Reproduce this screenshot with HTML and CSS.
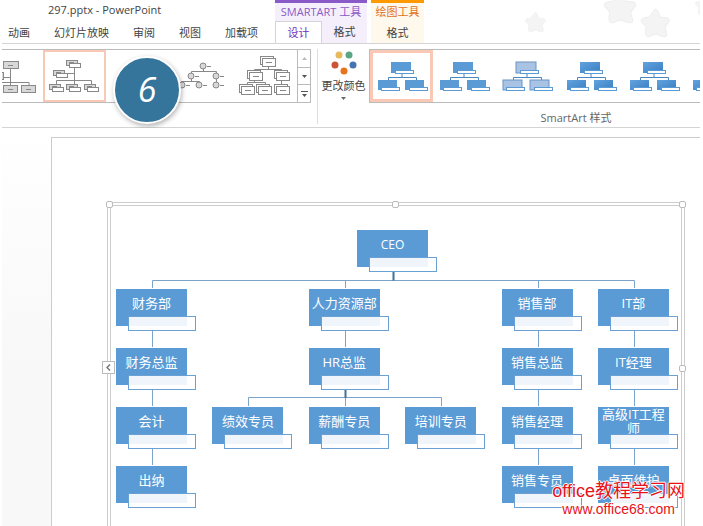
FILE: index.html
```html
<!DOCTYPE html>
<html lang="zh-CN">

<head>
    <meta charset="UTF-8">
    <meta name="viewport" content="width=device-width, initial-scale=1.0">
    <title>297.pptx - PowerPoint</title>
    <link rel="stylesheet" href="styles.css">
</head>

<body>
    <!-- shared shapes -->
    <svg class="defs" aria-hidden="true">
        <defs>
            <linearGradient id="shade" x1="0" y1="0" x2="1" y2="1">
                <stop offset="0" stop-color="#62a3de" />
                <stop offset="1" stop-color="#3a7fc4" />
            </linearGradient>
            <g id="pair">
                <rect x="0.5" y="0.5" width="11" height="5" fill="#d8d8d8" />
                <rect x="3.5" y="3.5" width="11" height="4" fill="#fff" />
                <path d="M3 2.5h5" />
            </g>
            <g id="stack">
                <rect x="0.5" y="0.5" width="13" height="8" fill="#fff" />
                <rect x="2.5" y="2.5" width="13" height="8" fill="#fff" />
                <path d="M6 6.5h6" />
            </g>
            <g id="dot">
                <circle cx="0" cy="0" r="3" fill="#d8d8d8" />
                <path d="M4 .5h4" />
            </g>
            <g id="org">
                <path class="org-line" d="M32 22v4M18.5 29v-2.5h28V29" />
                <rect x="21" y="11" width="20" height="11" />
                <rect x="8" y="29" width="19" height="10" />
                <rect x="35" y="29" width="19" height="10" />
                <rect class="org-cap" x="25.5" y="19.5" width="18" height="3" />
                <rect class="org-cap" x="11.5" y="36.5" width="18" height="3" />
                <rect class="org-cap" x="39.5" y="36.5" width="18" height="3" />
            </g>
            <path id="star" d="M16 2q3 0 5 8l8 1q4 2-3 9l2 8q-1 4-11-1l-8 3q-4-1-2-10l-5-6q-1-3 8-4z" />
        </defs>
    </svg>

    <header class="header">
        <svg class="stars" width="180" height="42" aria-hidden="true">
            <use href="#star" transform="translate(82 -10) scale(1.1)" />
            <use href="#star" transform="translate(4 11) scale(.7)" />
            <use href="#star" transform="translate(119 7)" />
            <use href="#star" transform="translate(174 -6) scale(.7)" />
        </svg>
        <div class="main-tabs">
            <h1 class="title">297.pptx - PowerPoint</h1>
            <nav class="tabs">
                <button class="tab">动画</button>
                <button class="tab">幻灯片放映</button>
                <button class="tab">审阅</button>
                <button class="tab">视图</button>
                <button class="tab">加载项</button>
            </nav>
        </div>
        <div class="tool-group smartart">
            <p class="tool-title">SMARTART 工具</p>
            <div class="tool-tabs">
                <button class="tab active">设计</button>
                <button class="tab">格式</button>
            </div>
        </div>
        <div class="tool-group drawing">
            <p class="tool-title">绘图工具</p>
            <div class="tool-tabs">
                <button class="tab">格式</button>
            </div>
        </div>
    </header>

    <section class="ribbon">
        <div class="gallery layouts">
            <div class="layout-list">
                <button class="thumb" aria-label="组织结构图">
                    <svg class="outline" width="59" height="48">
                        <path d="M28.5 16v18M18 25.5h10M9 34V30.5h38V34" />
                        <g fill="#d8d8d8">
                            <rect x="21.5" y="9.5" width="15" height="7" />
                            <rect x="8.5" y="20.5" width="13" height="7" />
                            <rect x="21.5" y="33.5" width="14" height="7" />
                            <rect x="39.5" y="33.5" width="14" height="7" />
                        </g>
                        <path d="M26 13.5h5M26 37.5h5M44 37.5h5" />
                    </svg>
                </button>
                <button class="thumb selected" aria-label="姓名和职务组织结构图">
                    <svg class="outline" width="59" height="48">
                        <path d="M29.5 15v18M20 21.5h9M11.5 33v-4.5h35V33" />
                        <use href="#pair" x="21" y="8" />
                        <use href="#pair" x="8" y="18" />
                        <use href="#pair" x="4" y="32" />
                        <use href="#pair" x="21" y="32" />
                        <use href="#pair" x="39" y="32" />
                    </svg>
                </button>
                <button class="thumb" aria-label="半圆组织结构图">
                    <svg class="outline" width="59" height="48">
                        <path d="M29.5 18v15M14.5 33v-4.5h30V33" />
                    </svg>
                </button>
                <button class="thumb" aria-label="圆形图片层次结构">
                    <svg class="outline" width="59" height="48">
                        <path d="M32.5 16v4M20.5 22v-2.5h25v14M10.5 33v-3.5h18V33M20.5 26v4" />
                        <use href="#dot" x="32" y="14" />
                        <use href="#dot" x="20" y="24" />
                        <use href="#dot" x="45" y="24" />
                        <use href="#dot" x="11" y="33" />
                        <use href="#dot" x="28" y="33" />
                        <use href="#dot" x="45" y="33" />
                    </svg>
                </button>
                <button class="thumb" aria-label="层次结构">
                    <svg class="outline" width="59" height="48">
                        <path d="M34.5 14v4M20.5 20v-2.5h27V33M13.5 33v-2.5h18V33M20.5 27v4" />
                        <use href="#stack" x="26" y="4" />
                        <use href="#stack" x="13" y="18" />
                        <use href="#stack" x="40" y="18" />
                        <use href="#stack" x="5" y="32" />
                        <use href="#stack" x="22" y="32" />
                        <use href="#stack" x="40" y="32" />
                    </svg>
                </button>
            </div>
            <div class="scroll">
                <button aria-label="上一行" disabled><svg width="5" height="3"><path d="M0 3l2.5-3L5 3z" /></svg></button>
                <button aria-label="下一行"><svg width="5" height="3"><path d="M0 0h5L2.5 3z" /></svg></button>
                <button aria-label="其他"><svg width="7" height="6"><path d="M0 0h7v1H0zM1 3h5L3.5 6z" /></svg></button>
            </div>
            <span class="step">6</span>
        </div>

        <div class="divider"></div>

        <button class="colors">
            <svg width="26" height="24" aria-hidden="true">
                <circle cx="8" cy="4" r="3.5" fill="#e8b85c" />
                <circle cx="18" cy="4" r="3.5" fill="#5aa583" />
                <circle cx="4" cy="14" r="3.5" fill="#cb5337" />
                <circle cx="22" cy="14" r="3.5" fill="#4674b0" />
                <circle cx="13" cy="20" r="3.5" fill="#e8731c" />
            </svg>
            <span>更改颜色</span>
            <svg width="5" height="3" aria-hidden="true"><path d="M0 0h5L2.5 3z" fill="#666" /></svg>
        </button>

        <div class="styles">
            <div class="gallery style-list">
                <button class="thumb selected" aria-label="简单填充"><svg class="org" width="59" height="48"><use href="#org" x="-2" y="-1" /></svg></button>
                <button class="thumb" aria-label="白色轮廓"><svg class="org" width="59" height="48"><use href="#org" x="-3" y="-1" /></svg></button>
                <button class="thumb" aria-label="细微效果"><svg class="org subtle" width="59" height="48"><use href="#org" x="-3" y="-1" /></svg></button>
                <button class="thumb" aria-label="中等效果"><svg class="org shaded" width="59" height="48"><use href="#org" x="-2" y="-1" /></svg></button>
                <button class="thumb" aria-label="强烈效果"><svg class="org shaded" width="59" height="48"><use href="#org" x="-2" y="-1" /></svg></button>
                <button class="thumb" aria-label="优雅"><svg class="org shaded" width="59" height="48"><use href="#org" x="-2" y="-1" /></svg></button>
            </div>
            <p class="group-name">SmartArt 样式</p>
        </div>
    </section>

    <main class="workspace">
        <div class="slide">
            <div class="frame">
                <i class="handle top-left"></i>
                <i class="handle top"></i>
                <i class="handle top-right"></i>
                <i class="handle right"></i>
                <button class="pane-toggle" aria-label="文本窗格">
                    <svg width="5" height="7"><path d="M4 0.5L1 3.5l3 3" fill="none" stroke="#777" stroke-width="1.5" /></svg>
                </button>

                <div class="chart">
                    <svg class="lines" viewBox="0 0 562 278" preserveAspectRatio="none" aria-hidden="true">
                        <path d="M36.5 58V50.5H518.5V58M229.5 50V58M422.5 50V58" />
                        <path d="M36.5 101v16M229.5 101v16M422.5 101v16M518.5 101v16" />
                        <path d="M36.5 160v16M422.5 160v16M518.5 160v16M229.5 160v16" />
                        <path d="M132.5 176v-8.5H325.5v8.5" />
                        <path d="M36.5 219v16M422.5 219v16M518.5 219v16" />
                        <path class="trunk" d="M277.5 42v8.5M229.5 160v8" />
                    </svg>
                    <div class="node ceo"><span>CEO</span></div>

                    <div class="node col-1"><span>财务部</span></div>
                    <div class="node col-3"><span>人力资源部</span></div>
                    <div class="node col-5"><span>销售部</span></div>
                    <div class="node col-6"><span>IT部</span></div>

                    <div class="node col-1"><span>财务总监</span></div>
                    <div class="node col-3"><span>HR总监</span></div>
                    <div class="node col-5"><span>销售总监</span></div>
                    <div class="node col-6"><span>IT经理</span></div>

                    <div class="node col-1"><span>会计</span></div>
                    <div class="node col-2"><span>绩效专员</span></div>
                    <div class="node col-3"><span>薪酬专员</span></div>
                    <div class="node col-4"><span>培训专员</span></div>
                    <div class="node col-5"><span>销售经理</span></div>
                    <div class="node col-6"><span>高级IT工程师</span></div>

                    <div class="node col-1"><span>出纳</span></div>
                    <div class="node col-5"><span>销售专员</span></div>
                    <div class="node col-6"><span>桌面维护</span></div>
                </div>
            </div>
        </div>
        <div class="watermark">
            <p class="site-name">office教程学习网</p>
            <p class="site-url">www.office68.com</p>
        </div>
    </main>
</body>

</html>
```

FILE: styles.css
```css
* {
    padding: 0;
    margin: 0;
    box-sizing: border-box;
}

body {
    display: flex;
    flex-direction: column;
    height: 100vh;
    padding: 0 3px 0 2px;
    overflow: hidden;
    font-family: "Open Sans", "Noto Sans CJK SC", sans-serif;
    font-size: 11px;
    line-height: 16px;
    color: #444;
    background: #fff;
}

button {
    font: inherit;
    color: inherit;
    background: none;
    border: none;
    cursor: pointer;
}

svg {
    display: block;
    flex-shrink: 0;
}

.defs {
    position: absolute;
    width: 0;
    height: 0;
}

/* title and tabs */

.header {
    position: relative;
    display: flex;
    height: 44px;
    flex-shrink: 0;
    border-bottom: 1px solid #d4d4d4;
}

.stars {
    position: absolute;
    top: 0;
    right: 0;
    fill: #f4f4f4;
    stroke: #eee;
}

.main-tabs {
    display: flex;
    flex-direction: column;
    width: 273px;
}

.title {
    height: 22px;
    padding: 2px 0 0 46px;
    font-size: 11px;
    font-weight: 400;
}

.tabs {
    display: flex;
    gap: 24px;
    padding-left: 6px;
}

.tab {
    height: 21px;
    line-height: 20px;
    white-space: nowrap;
}

.tool-group {
    display: flex;
    flex-direction: column;
    text-align: center;
}

.tool-title {
    height: 19px;
    line-height: 18px;
    white-space: nowrap;
}

.tool-tabs {
    display: flex;
    flex: 1;
}

.tool-tabs .tab {
    flex: 1;
}

.smartart {
    width: 92px;
    margin-right: 4px;
    border-top: 3px solid #8a5bc8;
    background: #f5effc;
}

.smartart .tool-title {
    color: #8a5bc8;
}

.drawing {
    width: 53px;
    border-top: 3px solid #f90;
    background: #fff8ec;
}

.drawing .tool-title {
    color: #e0701c;
}

.tool-tabs .active {
    height: 22px;
    border: 1px solid #d4d4d4;
    border-bottom: none;
    color: #7030c0;
    background: #fff;
}

/* ribbon */

.ribbon {
    display: flex;
    flex-shrink: 0;
    height: 84px;
    padding-top: 5px;
    border-bottom: 1px solid #d4d4d4;
}

.gallery {
    display: flex;
    height: 54px;
    border: 1px solid #bbb;
}

.layouts {
    position: relative;
    width: 309px;
    border-left: none;
}

.layout-list {
    display: flex;
    justify-content: flex-end;
    flex: 1;
    min-width: 0;
    padding-right: 2px;
    overflow: hidden;
}

.thumb {
    flex: 0 0 63px;
    height: 52px;
    border: 2px solid transparent;
}

.thumb.selected {
    border-color: #f9c9b6;
}

.outline {
    fill: none;
    stroke: #888;
}

.scroll {
    display: flex;
    flex-direction: column;
    width: 13px;
    border-left: 1px solid #bbb;
}

.scroll button {
    display: flex;
    flex: 1;
    align-items: center;
    justify-content: center;
    fill: #555;
}

.scroll button + button {
    border-top: 1px solid #bbb;
}

.scroll button:disabled {
    fill: #bbb;
}

.step {
    position: absolute;
    top: 6px;
    left: 111px;
    width: 68px;
    height: 68px;
    border: 2px solid #fff;
    border-radius: 50%;
    font-size: 34px;
    font-style: italic;
    line-height: 62px;
    text-align: center;
    color: #fff;
    background: #35749b;
    box-shadow: 1px 2px 5px rgba(0, 0, 0, 0.3);
}

.divider {
    width: 1px;
    height: 75px;
    margin-left: 6px;
    background: #ddd;
}

.colors {
    display: flex;
    flex-direction: column;
    align-items: center;
    width: 51px;
    height: 56px;
    padding-top: 2px;
    white-space: nowrap;
}

.colors span {
    height: 22px;
    line-height: 22px;
}

.styles {
    flex: 1;
    min-width: 0;
}

.style-list {
    border-right: none;
    overflow: hidden;
}

.style-list .selected {
    border-width: 3px;
}

.style-list .selected svg {
    margin: -1px;
}

.org {
    fill: #5b9bd5;
}

.org-line {
    fill: none;
    stroke: #4a86c0;
}

.org-cap {
    fill: #fff;
    stroke: #5b9bd5;
}

.subtle {
    fill: #a9c3e4;
    stroke: #6d93c2;
}

.shaded {
    fill: url(#shade);
}

.group-name {
    padding: 7px 0 0 83px;
    text-align: center;
    color: #666;
}

/* slide */

.workspace {
    position: relative;
    flex: 1;
    min-height: 0;
    padding: 9px 0 0 49px;
    overflow: hidden;
    background: linear-gradient(#fff, #f8f8f8 60%);
}

.slide {
    height: 100%;
    padding: 64px 15px 0 55px;
    border-top: 1px solid #ccc;
    border-left: 1px solid #ccc;
    background: #fff;
}

.frame {
    position: relative;
    padding: 24px 3px 60px 5px;
    border: 4px double #ccc;
}

.handle {
    position: absolute;
    width: 7px;
    height: 7px;
    border: 1px solid #bbb;
    border-radius: 2px;
    background: #fff;
}

.top-left {
    top: -5px;
    left: -5px;
}

.top {
    top: -5px;
    left: 50%;
    margin-left: -4px;
}

.top-right {
    top: -5px;
    right: -5px;
}

.right {
    top: 159px;
    right: -5px;
}

.pane-toggle {
    position: absolute;
    top: 155px;
    left: -9px;
    display: flex;
    align-items: center;
    justify-content: center;
    width: 13px;
    height: 13px;
    border: 1px solid #bbb;
    background: #fff;
}

.chart {
    position: relative;
    display: grid;
    grid-template-columns: repeat(6, 80px);
    grid-auto-rows: 42px;
    row-gap: 17px;
    justify-content: space-between;
}

.lines {
    position: absolute;
    width: 100%;
    height: 100%;
    fill: none;
    stroke: #7ba3cc;
}

.trunk {
    stroke: #41719c;
    stroke-width: 2;
}

.node {
    position: relative;
    height: 42px;
    background: linear-gradient(#5b9bd5, #5b9bd5) no-repeat 0 0 / 71px 37px;
}

/* empty title box in the corner */
.node::after {
    content: "";
    position: absolute;
    right: 0;
    bottom: 0;
    width: 66px;
    height: 13px;
    border: 1px solid #6ba0d4;
    background: rgba(255, 255, 255, 0.9);
}

.node span {
    display: flex;
    align-items: center;
    justify-content: center;
    width: 71px;
    height: 28px;
    font-size: 13px;
    line-height: 14px;
    text-align: center;
    color: #fff;
}

.ceo {
    grid-column: 3 / 5;
    justify-self: center;
    width: 80px;
}

.ceo span {
    height: 30px;
    font-size: 12px;
}

.col-1 {
    grid-column: 1;
}

.col-2 {
    grid-column: 2;
}

.col-3 {
    grid-column: 3;
}

.col-4 {
    grid-column: 4;
}

.col-5 {
    grid-column: 5;
}

.col-6 {
    grid-column: 6;
}

.watermark {
    position: absolute;
    right: 15px;
    bottom: 9px;
    text-align: center;
    color: #e8121a;
    text-shadow: 1px 0 #fff, -1px 0 #fff, 0 1px #fff, 0 -1px #fff;
}

.site-name {
    font-family: "Liberation Sans", "Noto Sans CJK SC", sans-serif;
    font-size: 18px;
    line-height: 20px;
}

.site-url {
    font-family: "Liberation Sans", sans-serif;
    font-size: 14px;
}
```
